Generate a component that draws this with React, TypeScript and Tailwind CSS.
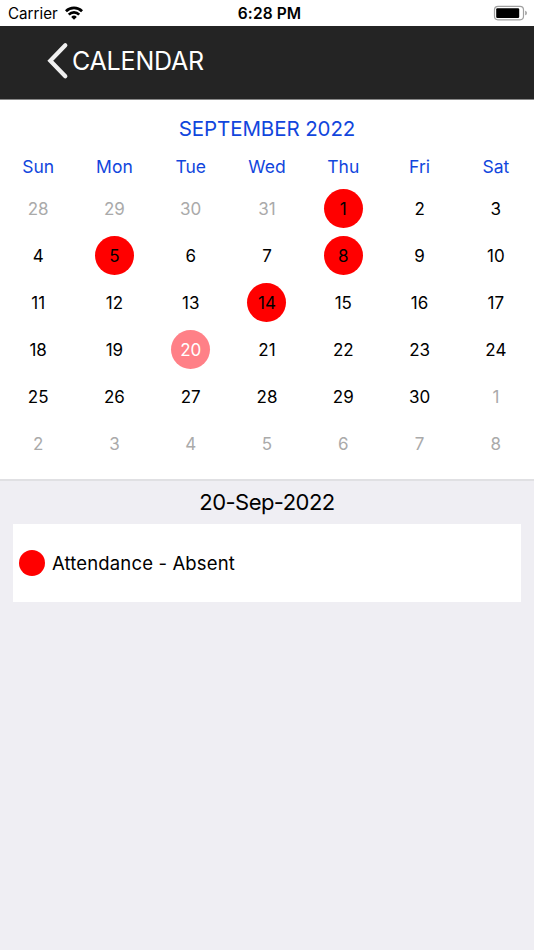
const WEEKDAYS = ['Sun', 'Mon', 'Tue', 'Wed', 'Thu', 'Fri', 'Sat'];

interface Day {
  label: number;
  outside: boolean;
  absent: boolean;
  selected: boolean;
}

const ABSENT_DAYS = [1, 5, 8, 14];
const SELECTED_DAY = 20;

// September 2022 starts on a Thursday, the grid shows six full weeks
const DAYS: Day[] = Array.from({ length: 42 }, (_, i) => {
  const n = i - 3;
  const outside = n < 1 || n > 30;
  return {
    label: n < 1 ? 31 + n : n > 30 ? n - 30 : n,
    outside,
    absent: !outside && ABSENT_DAYS.includes(n),
    selected: n === SELECTED_DAY,
  };
});

const dayClass = (day: Day) => {
  if (day.selected) return 'bg-[#ff8087] text-white';
  if (day.absent) return 'bg-[#ff0000] text-black';
  if (day.outside) return 'text-[#aaaaaa]';
  return 'text-black';
};

const StatusBar = () => (
  <div className="grid h-[26px] grid-cols-3 items-center bg-white text-black">
    <div className="flex items-center gap-[7px] pl-2 pt-[2px] text-[15.2px]">
      <span>Carrier</span>
      <svg width="18" height="14" viewBox="0 0 19 14" className="mb-[2px]" fill="none" stroke="black" strokeWidth="2.9">
        <path d="M1 5.1a12 12 0 0 1 17 0" />
        <path d="M4 8.700a7.800 7.800 0 0 1 11 0" />
        <path d="M9.500 14 6.500 11.100a4.300 4.300 0 0 1 6 0Z" fill="black" stroke="none" />
      </svg>
    </div>
    <div className="pl-[5px] pt-[2px] text-center text-[15.5px] font-semibold tracking-[0.1px]">6:28 PM</div>
    <div className="flex justify-end pr-[6px]">
      <svg width="35" height="16" viewBox="0 0 35 16">
        <rect x="1.5" y="1.3" width="29" height="13.5" rx="3.5" fill="none" stroke="#a0a0a0" strokeWidth="1.200" />
        <rect x="3.2" y="3.2" width="23" height="9.8" rx="1.2" fill="black" />
        <path d="M32.2 5.7v4.6c1.2-.4 1.7-1.2 1.7-2.3s-.5-1.9-1.7-2.3Z" fill="#a0a0a0" />
      </svg>
    </div>
  </div>
);

const Header = () => (
  <header className="flex h-[74px] items-center border-b border-[#888888] bg-[#242424] pb-[3px] pl-[47px] text-white">
    <svg width="22" height="38" viewBox="0 0 22 38" fill="none" stroke="#f0f0f0" strokeWidth="4.2" strokeLinecap="round">
      <path d="M18.3 3.200 3.300 18.800l15 15.500" />
    </svg>
    <h1 className="ml-[3px] pt-px text-[25px] tracking-[-0.2px]">CALENDAR</h1>
  </header>
);

const Calendar = () => (
  <section className="h-[381px] border-b-2 border-[#e0e0e3] bg-white">
    <h2 className="pt-[14px] text-center text-[20.5px] leading-[30px] tracking-[-0.1px] text-[#1146dd]">
      SEPTEMBER 2022
    </h2>
    <div className="mt-[11px] grid grid-cols-7 text-center text-[17.5px] leading-6 text-[#1146dd]">
      {WEEKDAYS.map((name) => (
        <span key={name}>{name}</span>
      ))}
    </div>
    <div className="mt-[6px] grid grid-cols-7 text-[17px]">
      {DAYS.map((day, i) => (
        <div key={i} className="flex h-[47px] items-center justify-center">
          <span className={`flex size-[39px] items-center justify-center rounded-full pt-[2px] ${dayClass(day)}`}>
            {day.label}
          </span>
        </div>
      ))}
    </div>
  </section>
);

const App = () => (
  <div className="flex min-h-screen flex-col bg-[#efeef3] font-['Inter',sans-serif]">
    <StatusBar />
    <Header />
    <Calendar />
    <section className="px-[13px]">
      <h3 className="h-[43px] text-center text-[22px] leading-[43px] tracking-[-0.55px] text-black">20-Sep-2022</h3>
      <div className="flex h-[78px] items-center gap-[7px] bg-white pl-[6px]">
        <span className="size-[26px] rounded-full bg-[#ff0000]" />
        <span className="pt-[2px] text-[18.5px] tracking-[0.15px] text-black">Attendance - Absent</span>
      </div>
    </section>
  </div>
);

export default App;
